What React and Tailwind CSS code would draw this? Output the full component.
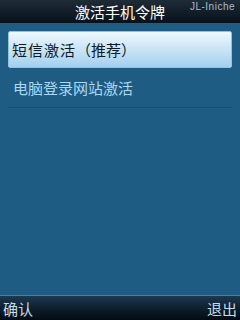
export default function App() {
  const font = { fontFamily: '"Noto Sans CJK SC", "Noto Sans", sans-serif' };
  return (
    <div className="w-[240px] h-[320px] flex flex-col bg-[#1f5c84] overflow-hidden" style={font}>
      <div className="relative h-[24px] shrink-0 bg-gradient-to-b from-[#1e2c38] to-[#07121b] border-b border-[#2d5a7a] flex items-center justify-center">
        <span className="text-white text-[15px] leading-none">激活手机令牌</span>
        <span className="absolute right-[5px] top-[2px] text-[10px] leading-none text-[#aebccb] tracking-[0.5px]" style={{ fontFamily: '"Liberation Sans", sans-serif' }}>JL-Iniche</span>
      </div>
      <div className="flex-1 flex flex-col px-[8px] pt-[7px]">
        <div className="h-[37px] flex items-center pl-[3px] rounded-[2px] bg-gradient-to-b from-[#eef8fe] to-[#a3d0ee] border border-[#8fc3e4]">
          <span className="text-[15px] leading-none text-[#0e1a24] tracking-[1px]">短信激活</span>
          <span className="text-[15px] leading-none text-[#0e1a24]">（推荐）</span>
        </div>
        <div className="h-[40px] flex items-center pl-[5px] border-b border-[#194d70]">
          <span className="text-[15px] leading-none text-[#a9d9f3]">电脑登录网站激活</span>
        </div>
      </div>
      <div className="h-[25px] shrink-0 border-t border-[#3f7ea6] bg-gradient-to-b from-[#1c3850] to-[#040b12] flex items-center justify-between px-[3px]">
        <span className="text-[15px] leading-none text-[#c4dcec]">确认</span>
        <span className="text-[15px] leading-none text-[#c4dcec]">退出</span>
      </div>
    </div>
  );
}
